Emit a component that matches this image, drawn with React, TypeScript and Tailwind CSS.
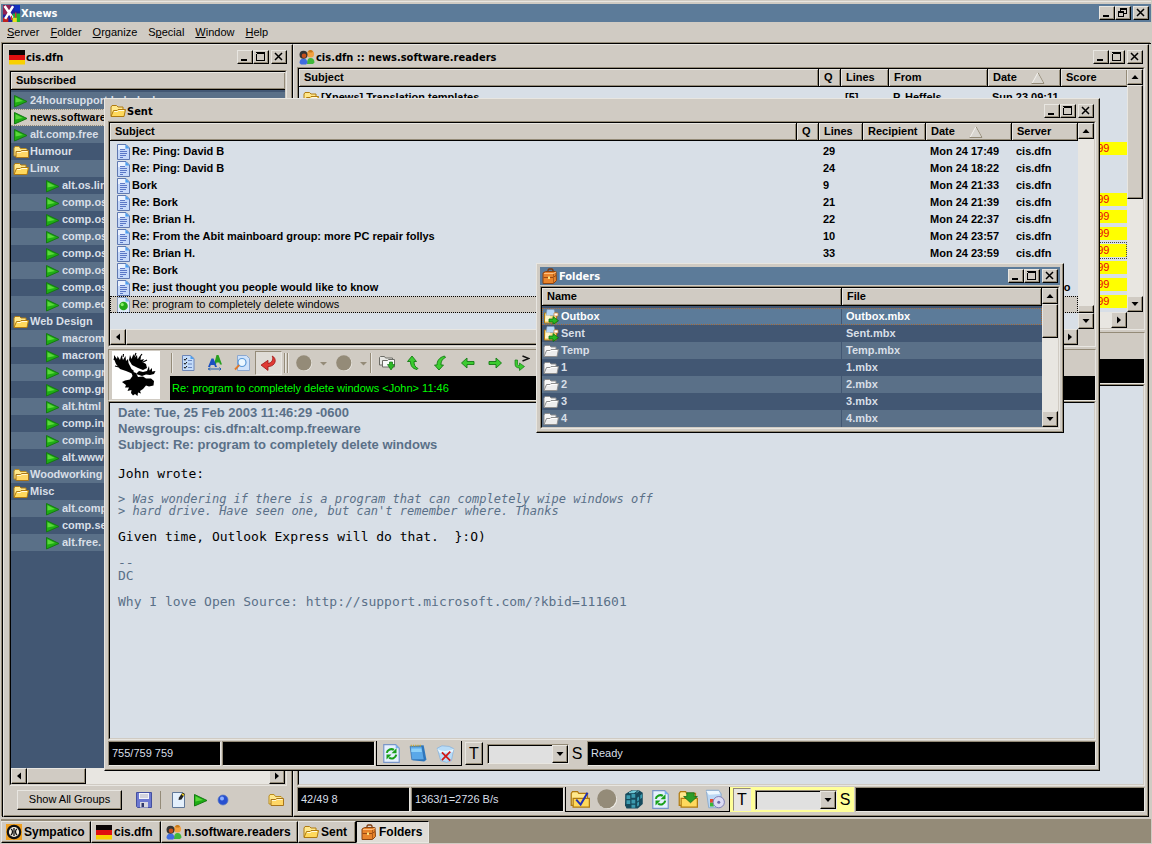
import type { ReactNode } from "react";
import clsx from "clsx";

const raised =
  "border border-t-[#e8e6e1] border-l-[#e8e6e1] border-r-black border-b-black shadow-[inset_-1px_-1px_#948b78]";
const sunken =
  "border border-t-[#948b78] border-l-[#948b78] border-r-[#e8e6e1] border-b-[#e8e6e1]";
const th =
  "h-[18px] border-r border-b border-black bg-[#d0cbc3] py-0 pr-0 pl-[5px] text-left font-bold text-black shadow-[inset_1px_1px_#e8e6e1,inset_-1px_-1px_#948b78]";
const ui = "font-['Liberation_Sans',Arial,sans-serif]";
const caption = "font-['DejaVu_Sans_Condensed','DejaVu_Sans',sans-serif]";

/* ---------- icons ---------- */

function Svg({ size = 16, children }: { size?: number; children: ReactNode }) {
  return (
    <svg width={size} height={size} viewBox="0 0 16 16" className="shrink-0" aria-hidden="true">
      {children}
    </svg>
  );
}

function Play() {
  return (
    <Svg>
      <path d="M1.500 2.500 14 8.500 1.500 14z" fill="#1fae14" stroke="#147a12" />
      <path d="M2.500 4.300 10 8 2.500 9.500z" fill="#5ad83a" />
    </Svg>
  );
}

function Folder({ white = false }: { white?: boolean }) {
  const line = white ? "#8e8e8e" : "#b07a10";
  return (
    <Svg>
      <path d="M1 13V4l1-1.500h4.500L8 4h5v3" fill={white ? "#f8f8f8" : "#ffe88c"} stroke={line} />
      <path d="M1 13.500 3.500 7.500h3.500l1-1h7.500l-1.500 7z" fill={white ? "#ededed" : "#ffd95c"} stroke={line} />
      <path d="M4.200 8.500h3.500l1-1h5.300" stroke={white ? "#fff" : "#fffbe0"} fill="none" />
    </Svg>
  );
}

function ClosedFolder() {
  return (
    <Svg>
      <path d="M1 12V4l1-1.500h4L7.500 4.500h5.500l1 1v6.500z" fill="#ffe88c" stroke="#b98a1c" />
      <path d="M3 13.500v-6h4.500l1-1h7v7z" fill="#ffd766" stroke="#a8741a" />
      <path d="M4 8.500h4l1-1h5.500" stroke="#fff8d0" fill="none" />
    </Svg>
  );
}

function Doc() {
  return (
    <Svg>
      <path d="M1.500.5h8.500l3.500 3.500v11.500h-12z" fill="#c6d9fa" stroke="#5f78b0" />
      <path d="M2 1h7v5H2z" fill="#eaf2ff" />
      <path d="M9.500.5 13.500 4.500h-4z" fill="#4aa0f0" />
      <path d="M4 5.500h5M4 7.500h7M4 9.500h7M4 11.500h6M4 13.500h3" stroke="#4f6cc0" strokeWidth=".9" />
    </Svg>
  );
}

function ReadDoc() {
  return (
    <Svg>
      <path d="M1.500.5h8.500l3.500 3.500v11.500h-12z" fill="#dfeafb" stroke="#8a9cbc" />
      <path d="M9.500.5 13.500 4.500h-4z" fill="#7ab8f0" />
      <circle cx="7.500" cy="9" r="4.300" fill="#22a818" />
      <circle cx="6.200" cy="7.600" r="1.600" fill="#8cf06c" />
    </Svg>
  );
}

function Flag() {
  return (
    <Svg>
      <path d="M0 1h16v5H0z" fill="#0a0505" />
      <path d="M0 6h16v5H0z" fill="#e01010" />
      <path d="M0 11h16v4.500H0z" fill="#f8d000" />
    </Svg>
  );
}

function People() {
  return (
    <Svg>
      <path d="M8 14c0-3 1-5 3.500-5s4 2 4 4.500L14 15H8z" fill="#3fb83a" />
      <circle cx="11.500" cy="5" r="3.600" fill="#f2a040" />
      <path d="M9 2.500c1-2 4-2 5 0l-1 1h-3z" fill="#c87818" />
      <path d="M.5 14c0-3 1.500-4.500 4-4.500s4 2 4 4.500L7 15.500H2z" fill="#3f6ce0" />
      <circle cx="4.500" cy="5.800" r="4" fill="#333" />
      <circle cx="5" cy="6.800" r="2.300" fill="#c8501c" />
    </Svg>
  );
}

function Briefcase() {
  return (
    <Svg>
      <path d="M6 4.500V2l1-1h3l1 1v2" fill="none" stroke="#7a3a10" strokeWidth="1.300" />
      <path d="M1 5 3.500 3.500h10.500l.5 9-3 3H1z" fill="#e8842c" stroke="#8a4412" />
      <path d="M2 5.500h9.500L14 4" fill="none" stroke="#ffc080" />
      <path d="M1.500 9.500h9.500l3-2" fill="none" stroke="#9a4a14" />
      <path d="M11.500 6v9" stroke="#b05c1c" />
      <path d="M6 8.500h2v2.500H6z" fill="#f8e080" />
    </Svg>
  );
}

function OutFolder() {
  return (
    <Svg>
      <path d="M1.500 14V4h12v10z" fill="#ffe08a" stroke="#b07a10" />
      <path d="M4 .5h7l1.500 6H3z" fill="#b8d8f8" stroke="#8098b0" strokeWidth=".6" />
      <path d="M3 6.500h4L8 12H2z" fill="#fff6cc" />
      <path d="M11 4h4v3h-4z" fill="#fff" stroke="#d08030" strokeWidth=".7" />
      <path d="M6 10h4V7.500l5.500 4.200L10 15.500V13H6z" fill="#28b820" stroke="#0d6a10" strokeWidth=".8" />
    </Svg>
  );
}

function XLogo() {
  return (
    <svg width="17" height="17" viewBox="0 0 16 16" className="shrink-0" aria-hidden="true">
      <path d="M0 0h16v16H0z" fill="#2020a0" />
      <path d="M0 0h7v9H0z" fill="#902050" />
      <path d="M9 8h7v8H9z" fill="#20b030" />
      <path d="M9 12h4v4H9z" fill="#e8e020" />
      <path d="M11 0h5v6h-5z" fill="#1030c0" />
      <path d="M0 12h5v4H0z" fill="#c02020" />
      <path d="M1.500 1 9 12M9.500 1 2 13" stroke="#fff" strokeWidth="2.400" />
      <path d="M8 10v4M12 7v5" stroke="#e03030" strokeWidth="1.200" />
    </svg>
  );
}

function Refresh() {
  return (
    <Svg size={19}>
      <path d="M1.500.5h10l3 3v12h-13z" fill="#e6f0ff" stroke="#7a96c8" />
      <path d="M11.500.5l3 3h-3z" fill="#78b0f0" />
      <path d="M4 7.500c.5-3 4-4 6-2.500" fill="none" stroke="#18a018" strokeWidth="1.800" />
      <path d="M12.200 3.500v4.200H8z" fill="#18a018" />
      <path d="M12 9c-.5 3-4 4-6 2.500" fill="none" stroke="#18a018" strokeWidth="1.800" />
      <path d="M3.800 13V8.800H8z" fill="#18a018" />
    </Svg>
  );
}

function Notebook() {
  return (
    <Svg size={18}>
      <path d="M1.500 2 13 1l2.500 13-2 1.500-10-1z" fill="#2c78c0" />
      <path d="M1 2h10.500l2 12H2.500z" fill="#5aa8e8" stroke="#2c68a8" strokeWidth=".6" />
      <path d="M2 4h9l.5 3H2z" fill="#8cd0f8" />
      <path d="M1.500 1.500h10" stroke="#c8a830" strokeDasharray="1 1" strokeWidth="1.500" />
    </Svg>
  );
}

function Trash() {
  return (
    <Svg size={19}>
      <path d="M1 3.500 5 1.500l6 .5 4 2-2 10-4 1.500-5-1.500z" fill="#b8dcf8" stroke="#8cb4dc" strokeWidth=".7" />
      <path d="M1 4c4 3 10 2 14 0l-1 3-11 .5z" fill="#e6f5ff" />
      <path d="m5 7 7 7M12 6.500l-7 7" stroke="#d01818" strokeWidth="1.500" />
    </Svg>
  );
}

function DocCheck() {
  return (
    <Svg>
      <path d="M2.500.5h8l3.500 3v12H2.500z" fill="#c4dcfa" stroke="#6d86b8" />
      <path d="M10.500.5 14 4h-3.500z" fill="#4aa0f0" />
      <path d="m4 4 1 1.300L7 3M4 8l1 1.300L7 7M4 12l1 1.300L7 11" fill="none" stroke="#111" />
      <path d="M8 5.500h4M8 9h4M8 12.500h4" stroke="#6b86c0" />
    </Svg>
  );
}

function Letters() {
  return (
    <Svg>
      <path d="M7 9.500 9.500 0h2l3.500 9.500h-2l-.7-2H9.500L9 9.500z" fill="#28a020" />
      <path d="M1 12 4.500 3.500H6.500L10 12H8l-.7-2H3.800L3 12z" fill="#1c50c0" />
      <path d="M1 14h13m-11-1.500L1.500 14 3 15.500m9.500-3L14 14l-1.500 1.500" stroke="#2460b0" fill="none" />
    </Svg>
  );
}

function Lens() {
  return (
    <Svg>
      <path d="M3.500 .5h9l3 3v12h-12z" fill="#cfe2fa" stroke="#8ca8d0" />
      <circle cx="8" cy="7.500" r="4" fill="#ecf7ff" stroke="#5a98d8" strokeWidth="1.200" />
      <path d="M5.200 10.200 1 14.500" stroke="#e07828" strokeWidth="1.900" />
    </Svg>
  );
}

function RedReturn() {
  return (
    <Svg size={17}>
      <path d="M11.500 1c4.500 2 4 9.500-4 10v3.500L1 9.500 7.500 5v3C11 7.500 13 4.500 11.500 1z" fill="#e03a34" stroke="#a01818" strokeWidth=".8" />
    </Svg>
  );
}

function SendFolder() {
  return (
    <Svg>
      <path d="M.5 10V2.500l1-1h4l1 1.500h7v7z" fill="#e8e8e4" stroke="#6c6c66" />
      <path d="M3.500 12V5.500h5l1-1h6v7.500z" fill="#fafafa" stroke="#6c6c66" />
      <path d="M8.500 9.500H10.500V7h3v2.500h2.300L12 15z" fill="#2cb824" stroke="#127012" strokeWidth=".7" />
    </Svg>
  );
}

const greenArrows = {
  up: "M6 1 1.500 6.500H4.500c0 4 1.500 7 6.500 8l1-1C9 12 8 10 8 6.500h2.500z",
  down: "M6 15 1.500 10H4c0-4 2-7.500 7.500-9l1 1.500C9 4 8 7 8 10h2.500z",
  left: "M1.500 8 7 3v3.500h7v3H7V13z",
  right: "M14.500 8 9 3v3.500H2v3h7V13z",
};

function GreenArrow({ dir }: { dir: keyof typeof greenArrows }) {
  return (
    <Svg>
      <path d={greenArrows[dir]} fill="#3ccc30" stroke="#147a14" strokeWidth=".9" />
    </Svg>
  );
}

function NextUnread() {
  return (
    <Svg>
      <path d="M1 5v4c0 3 2 4 4.500 4v2.500L10.500 11.500 5.500 8v2.500C4 10.500 3.500 10 3.500 9V5z" fill="#3ccc30" stroke="#147a14" strokeWidth=".7" />
      <path d="m8.500 1 6.500 2.500L8.500 6" fill="none" stroke="#111" strokeWidth="1.400" />
    </Svg>
  );
}

function FolderCheck() {
  return (
    <Svg size={20}>
      <path d="M1 13V3.500l1-1.500h4l1 1.500h7V13z" fill="#ffe88c" stroke="#b07a10" />
      <path d="M2.500 14.500v-7h13v7z" fill="#ffd95c" stroke="#b07a10" />
      <path d="m5 8.500 3.500 4L14 3" fill="none" stroke="#2030b8" strokeWidth="1.600" />
    </Svg>
  );
}

function FolderDown() {
  return (
    <Svg size={20}>
      <path d="M1 13V3.500l1-1.500h4l1 1.500h7V13z" fill="#ffe88c" stroke="#b07a10" />
      <path d="M2.500 14.500v-7h13v7z" fill="#ffd95c" stroke="#b07a10" />
      <path d="M7 3h6v3h2.500L10 11 4.500 6H7z" fill="#2c9c28" stroke="#146a14" strokeWidth=".6" />
    </Svg>
  );
}

function Cubes() {
  return (
    <Svg size={20}>
      <path d="m1 4 5-3h6l3 2v9l-4 3.500H2L.8 13z" fill="#164a5c" />
      <path d="M2 5h3v3H2zM6 4h3v3H6zM2 9h3v3H2zM6 8.500h3v3H6zM6 12.500h3V15H6zM10.500 7l1.500-1v3l-1.500 1zM13 5l1.500-1v3L13 8zM10.500 11l1.500-1v3l-1.500 1z" fill="#3c9cb0" />
      <path d="m4 3 3-1.500h3L8 3zM10 3l2-1.500" stroke="#8ce0ec" fill="#6ccbdc" strokeWidth=".5" />
    </Svg>
  );
}

function DiscBox() {
  return (
    <Svg size={20}>
      <path d="M1 1h10l2 3-1 11H3z" fill="#bcd8f4" stroke="#88a8cc" strokeWidth=".7" />
      <path d="M1 1.500h10l1 2.500-9 .5z" fill="#eef8ff" />
      <path d="M4 8h3v3H4z" fill="#e84830" />
      <path d="M4 11h3v3H4z" fill="#38b838" />
      <circle cx="11" cy="10.500" r="4.500" fill="#dcdcf4" stroke="#8080b8" strokeWidth=".8" />
      <circle cx="11" cy="10.500" r="1.200" fill="#6868a8" />
    </Svg>
  );
}

function Floppy() {
  return (
    <Svg>
      <path d="M.5 .5h15v15h-14l-1-1z" fill="#6c78d0" stroke="#4450a0" />
      <path d="M3 1h10v6H3z" fill="#f4f4fa" />
      <path d="M4 3h8M4 5h8" stroke="#b0b0c0" />
      <path d="M4 10h8v5.500H4z" fill="#d8d8e0" />
      <path d="M5.500 11h2.500v4H5.500z" fill="#30386c" />
    </Svg>
  );
}

function Compose() {
  return (
    <Svg>
      <path d="M1.500.5h10l2 2v13h-12z" fill="#e4f0fc" stroke="#607898" />
      <path d="m7.500 8 .5-2.500 3.500-5L14 2 10.500 7.500z" fill="#222" />
      <path d="m11 2 2 1.300" stroke="#f0d020" strokeWidth="1.600" />
    </Svg>
  );
}

function Ball() {
  return (
    <svg width="12" height="12" viewBox="0 0 12 12" aria-hidden="true">
      <circle cx="6" cy="6" r="5" fill="#2850d0" stroke="#5878c0" strokeWidth=".7" />
      <circle cx="5" cy="4.500" r="2" fill="#8cb0ff" />
    </svg>
  );
}

function Sympatico() {
  return (
    <Svg>
      <path d="M0 0h16v16H0z" fill="#f0a020" />
      <circle cx="8" cy="8" r="6.200" fill="#f6f0e4" stroke="#111" strokeWidth="2.200" />
      <path d="M5 5c2 1 2 4 0 6M8 4v8M11 5c-2 1-2 4 0 6" stroke="#111" strokeWidth="1.300" fill="none" />
    </Svg>
  );
}

function Moose() {
  return (
    <svg width="48" height="48" viewBox="0 0 48 48" className="mt-px ml-[3px] shrink-0 bg-white" aria-hidden="true">
      <path d="M2 4 5 8 5.500 5 8 9 9.500 4 11 9 13.500 5 14 10 16 8 16.500 12 18 15 19.500 18 22 20 20 22.500 14 20 8 18 4 13 2 8z" />
      <path d="M17 9 18 4 19.500 8 21.500 3 22.500 7 25 4 25.500 8 29 5 28.500 9 32 8 30.500 11 34 13 35 17 31 19 26 17 20 14z" />
      <path d="M11 6 11.500 3M22 7 24 2M27 7 30 3M31 11 35 9M4 9 1.500 8M7 16 3 15" stroke="#000" strokeWidth="1.200" />
      <path d="M24 23 27 20 31 21 35 20 37 15 37.500 19.500 40 17 40 20.500 43.500 20 42 23 38 24 34 23.500 30 25z" />
      <path d="M19 20 24 22 26 26 31 25.500 34 27.500 39 27.500 42 30 41.500 34.500 37 35.500 34 34.500 31 38 28 40 29 42.500 26 41.500 25.500 45 23 43 21 44.500 19 42 19.500 39 15.500 40 17 36.500 13 36.500 14 34 10 31 13 29.500 18 28.500 20.500 25z" />
      <path d="M22 17.500 25 21" stroke="#fff" strokeWidth="1.500" />
    </svg>
  );
}

function Dot({ size = 16 }: { size?: number }) {
  return (
    <svg width={size} height={size} viewBox="0 0 16 16" aria-hidden="true">
      <circle cx="8.500" cy="8.500" r="7.500" fill="#f0eee9" />
      <circle cx="7.800" cy="7.800" r="7.600" fill="#948b78" />
    </svg>
  );
}

/* ---------- window parts ---------- */

function CapButton({ kind }: { kind: "min" | "max" | "restore" | "close" }) {
  return (
    <button aria-label={kind} className={clsx("flex h-[14px] w-4 items-center justify-center bg-[#d0cbc3]", raised, kind === "close" && "ml-[2px]")}>
      <svg width="10" height="10" viewBox="0 0 10 10" fill="none" stroke="#000" shapeRendering="crispEdges" aria-hidden="true">
        {kind === "min" && <path d="M1 8h6" strokeWidth="2" />}
        {kind === "max" && <path d="M.5 1h8M.5 1.500v7h8v-7M0 .5h9" />}
        {kind === "restore" && <path d="M2.500 3V.5h6v5H6M3 1.500h5M.5 3.500h5v5h-5zM1 4.500h5" />}
        {kind === "close" && <path d="m1 1 7 7M8 1 1 8" strokeWidth="1.500" shapeRendering="auto" />}
      </svg>
    </button>
  );
}

function Caption({ icon, title, blue, restore }: { icon: ReactNode; title: string; blue?: boolean; restore?: boolean }) {
  return (
    <div className={clsx("flex h-[18px] shrink-0 items-center pr-[2px] pl-[2px]", blue ? "bg-[#5c7b99] text-white" : "text-black")}>
      {icon}
      <span className={clsx("ml-px flex-1 text-[11px] font-bold whitespace-nowrap", caption)}>{title}</span>
      <CapButton kind="min" />
      <CapButton kind={restore ? "restore" : "max"} />
      <CapButton kind="close" />
    </div>
  );
}

function Win({ className, icon, title, blue, children }: { className?: string; icon: ReactNode; title: string; blue?: boolean; children: ReactNode }) {
  return (
    <section className={clsx("flex flex-col bg-[#d0cbc3] p-[3px]", raised, className)}>
      <div className="mb-px">
        <Caption icon={icon} title={title} blue={blue} />
      </div>
      {children}
    </section>
  );
}

function Frame({ className, inner, children }: { className?: string; inner?: string; children?: ReactNode }) {
  return (
    <div className={clsx("flex min-h-0", sunken, className)}>
      <div className={clsx("flex min-w-0 flex-1 flex-col overflow-hidden border border-t-black border-r-[#d0cbc3] border-b-[#d0cbc3] border-l-black", inner)}>
        {children}
      </div>
    </div>
  );
}

const tri = {
  up: "M4 2 7.500 6h-7z",
  down: "M4 6 .5 2h7z",
  left: "M2 4 6 .5v7z",
  right: "M6 4 2 .5v7z",
};

function Arrow({ dir }: { dir: keyof typeof tri }) {
  return (
    <button aria-label={`Scroll ${dir}`} className={clsx("flex size-4 shrink-0 items-center justify-center bg-[#d0cbc3]", raised)}>
      <svg width="8" height="8" viewBox="0 0 8 8" aria-hidden="true">
        <path d={tri[dir]} />
      </svg>
    </button>
  );
}

function VScroll({ children }: { children?: ReactNode }) {
  return (
    <div className="flex w-4 shrink-0 flex-col bg-[#e8e6e1]">
      <Arrow dir="up" />
      <div className="flex flex-1 flex-col">{children}</div>
      <Arrow dir="down" />
    </div>
  );
}

function HScroll({ thumb, corner }: { thumb: string; corner?: boolean }) {
  return (
    <div className="flex h-4 shrink-0">
      <div className="flex flex-1 bg-[#e8e6e1]">
        <Arrow dir="left" />
        <div className="flex flex-1">
          <div className={clsx("bg-[#d0cbc3]", raised, thumb)} />
        </div>
        <Arrow dir="right" />
      </div>
      {corner && <div className="w-4 bg-[#d0cbc3]" />}
    </div>
  );
}

function SortHead({ label }: { label: string }) {
  return (
    <span className="flex items-center">
      {label}
      <svg width="14" height="12" viewBox="0 0 14 12" className="ml-[14px]" aria-hidden="true">
        <path d="M7 .5 13 11.500H1z" fill="#d8d5cf" stroke="#f4f2ee" />
        <path d="M7 .5 13 11.500H.5" fill="none" stroke="#948b78" />
      </svg>
    </span>
  );
}

function StatusBar({ left, right, message, alert, children }: { left: string; right?: string; message?: string; alert?: boolean; children: ReactNode }) {
  const cell = clsx("flex items-center overflow-hidden bg-black px-[3px] text-[11px] whitespace-nowrap text-[#d8dfe7]", sunken);
  return (
    <div className="flex h-[27px] shrink-0 py-px">
      <div className={clsx("mr-px w-[113px]", cell)}>{left}</div>
      <div className={clsx("mr-px w-[153px]", cell)}>{right}</div>
      <div className="flex items-center border-r border-b border-l border-black px-px">{children}</div>
      <div className={clsx("flex items-center pr-px pl-[3px]", alert && "bg-[#ffff98]")}>
        <button className={clsx("h-[23px] w-[18px] text-base leading-none", alert ? clsx(sunken, "bg-[#e8e6e1]") : clsx(raised, "bg-[#d0cbc3]"))}>T</button>
        <div className={clsx("ml-1 flex h-5 w-[82px] bg-[#e0e0e0]", sunken)}>
          <select aria-label="Search" className="min-w-0 flex-1 appearance-none border-t border-l border-black" />
          <span className={clsx("flex w-4 items-center justify-center bg-[#d0cbc3]", raised)}>
            <svg width="8" height="8" viewBox="0 0 8 8" aria-hidden="true">
              <path d={tri.down} />
            </svg>
          </span>
        </div>
        <button className="w-4 text-base leading-none">S</button>
      </div>
      <div className={clsx("ml-px min-w-0 flex-1", cell)}>{message}</div>
    </div>
  );
}

/* ---------- data ---------- */

const groups: [string, "root" | "sub" | "open" | "closed"][] = [
  ["24hoursupport.helpdesk", "root"],
  ["news.software", "root"],
  ["alt.comp.free", "root"],
  ["Humour", "closed"],
  ["Linux", "open"],
  ["alt.os.lin", "sub"],
  ["comp.os", "sub"],
  ["comp.os", "sub"],
  ["comp.os", "sub"],
  ["comp.os", "sub"],
  ["comp.os", "sub"],
  ["comp.os", "sub"],
  ["comp.ed", "sub"],
  ["Web Design", "open"],
  ["macrom", "sub"],
  ["macrom", "sub"],
  ["comp.gr", "sub"],
  ["comp.gr", "sub"],
  ["alt.html", "sub"],
  ["comp.inf", "sub"],
  ["comp.inf", "sub"],
  ["alt.www", "sub"],
  ["Woodworking", "closed"],
  ["Misc", "open"],
  ["alt.comp", "sub"],
  ["comp.se", "sub"],
  ["alt.free.", "sub"],
];

type Message = { subject: string; lines?: number; date?: string; server?: string };

const messages: Message[] = [
  { subject: "Re: Ping: David B", lines: 29, date: "Mon 24 17:49", server: "cis.dfn" },
  { subject: "Re: Ping: David B", lines: 24, date: "Mon 24 18:22", server: "cis.dfn" },
  { subject: "Bork", lines: 9, date: "Mon 24 21:33", server: "cis.dfn" },
  { subject: "Re: Bork", lines: 21, date: "Mon 24 21:39", server: "cis.dfn" },
  { subject: "Re: Brian H.", lines: 22, date: "Mon 24 22:37", server: "cis.dfn" },
  { subject: "Re: From the Abit mainboard group: more PC repair follys", lines: 10, date: "Mon 24 23:57", server: "cis.dfn" },
  { subject: "Re: Brian H.", lines: 33, date: "Mon 24 23:59", server: "cis.dfn" },
  { subject: "Re: Bork" },
  { subject: "Re: just thought you people would like to know", server: "sympatico" },
];

const scored = [3, 6, 7, 8, 9, 10, 11, 12];
const folders = ["Outbox", "Sent", "Temp", "1", "2", "3", "4"];

/* ---------- windows ---------- */

function GroupsWindow() {
  return (
    <Win className="w-[290px] shrink-0" icon={<Flag />} title="cis.dfn">
      <Frame className="mx-[2px] mt-[3px] flex-1" inner="bg-[#425773]">
        <div className={clsx(th, "flex shrink-0 items-center border-r-0")}>Subscribed</div>
        <ul className="mt-[2px] min-h-0 flex-1">
          {groups.map(([name, kind], i) => (
            <li
              key={i}
              className={clsx(
                "flex h-[17px] items-center gap-px font-bold whitespace-nowrap",
                kind === "sub" ? "pl-[34px]" : "pl-[2px]",
                i === 1
                  ? "border-y border-dotted border-[#948b78] bg-[#d0cbc3] text-black"
                  : clsx("text-[#d8dfe7]", i % 2 === 0 && "bg-[#5a7088]"),
              )}
            >
              {kind === "open" ? <Folder /> : kind === "closed" ? <ClosedFolder /> : <Play />}
              <span>{name}</span>
            </li>
          ))}
        </ul>
        <HScroll thumb="w-[59px]" />
      </Frame>
      <div className="flex h-[27px] shrink-0 items-center px-[3px]">
        <button className={clsx("ml-[7px] h-5 w-[105px] bg-[#d0cbc3]", raised)}>Show All Groups</button>
        <button aria-label="Save" className="ml-[14px]"><Floppy /></button>
        <span className="mx-2 h-[18px] w-px bg-[#948b78]" />
        <button aria-label="Compose" className="ml-[2px]"><Compose /></button>
        <button aria-label="Connect" className="ml-[6px]"><Play /></button>
        <button aria-label="Online" className="ml-2"><Ball /></button>
        <button aria-label="Folders" className="mr-[2px] ml-auto"><ClosedFolder /></button>
      </div>
    </Win>
  );
}

function ReaderWindow() {
  return (
    <Win className="min-w-0 flex-1" icon={<People />} title="cis.dfn :: news.software.readers">
      <Frame className="h-[263px] shrink-0" inner="bg-[#d8dfe7]">
        <div className="flex min-h-0 flex-1">
          <div className="min-w-0 flex-1 overflow-hidden">
            <table className="w-full table-fixed border-separate border-spacing-0">
              <thead>
                <tr>
                  <th className={th}>Subject</th>
                  <th className={clsx(th, "w-[22px]")}>Q</th>
                  <th className={clsx(th, "w-12")}>Lines</th>
                  <th className={clsx(th, "w-[99px]")}>From</th>
                  <th className={clsx(th, "w-[73px]")}><SortHead label="Date" /></th>
                  <th className={clsx(th, "w-[66px] border-r-0")}>Score</th>
                </tr>
              </thead>
              <tbody className="font-bold">
                <tr className="h-[2px]"><td /></tr>
                {Array.from({ length: 13 }, (_, i) => (
                  <tr key={i} className={clsx("h-[17px]", i === 9 && "outline-1 -outline-offset-1 outline-dotted outline-[#444]")}>
                    <td className="p-0">
                      {i === 0 && (
                        <span className="flex items-center gap-[2px] pl-1"><Folder />[Xnews] Translation templates</span>
                      )}
                    </td>
                    <td className="p-0" />
                    <td className="p-0 pl-1">{i === 0 && "[5]"}</td>
                    <td className="p-0 pl-1">{i === 0 && "P. Heffels"}</td>
                    <td className="p-0 pl-1 whitespace-nowrap">{i === 0 && "Sun 23 09:11"}</td>
                    <td className="p-0 font-normal text-red-600">
                      {scored.includes(i) && <span className="block h-[13px] bg-[#ffff00] pl-6 leading-[13px]">9999</span>}
                    </td>
                  </tr>
                ))}
              </tbody>
            </table>
          </div>
          <VScroll><div className={clsx("h-[114px] bg-[#d0cbc3]", raised)} /></VScroll>
        </div>
        <HScroll thumb="w-[600px]" corner />
      </Frame>
      <div className={clsx("mt-[2px] shrink-0", sunken)}>
        <div className="h-[26px]" />
        <div className="h-6 bg-black" />
      </div>
      <Frame className="flex-1" inner="bg-[#d8dfe7]" />
      <StatusBar left="42/49 8" right="1363/1=2726 B/s" alert>
        <button aria-label="Mark read" className="px-[3px]"><FolderCheck /></button>
        <button aria-label="Stop" className="px-[4px]"><Dot size={20} /></button>
        <button aria-label="Servers" className="px-[3px]"><Cubes /></button>
        <button aria-label="Refresh" className="px-[4px]"><Refresh /></button>
        <button aria-label="Move" className="px-[4px]"><FolderDown /></button>
        <button aria-label="Archive" className="px-[3px]"><DiscBox /></button>
      </StatusBar>
    </Win>
  );
}

function Tool({ label, pressed, children }: { label: string; pressed?: boolean; children: ReactNode }) {
  return (
    <button aria-label={label} className={clsx("flex h-6 w-[27px] shrink-0 items-center justify-center", pressed && clsx(sunken, "bg-[#dfdcd6]"))}>
      {children}
    </button>
  );
}

function DropMark() {
  return (
    <svg width="13" height="8" viewBox="0 0 13 8" className="shrink-0" aria-hidden="true">
      <path d="M3 3h7L6.500 6.500z" fill="#948b78" />
    </svg>
  );
}

function Sep() {
  return <span className="mr-px h-5 w-[2px] shrink-0 border-r border-l border-l-[#948b78] border-r-[#e8e6e1]" />;
}

function SentWindow() {
  return (
    <Win className="absolute top-[98px] right-[52px] bottom-[73px] left-[104px]" icon={<Folder />} title="Sent">
      <Frame className="h-[226px] shrink-0" inner="bg-[#d8dfe7]">
        <div className="flex min-h-0 flex-1">
          <div className="min-w-0 flex-1 overflow-hidden">
            <table className="w-full table-fixed border-separate border-spacing-0">
              <thead>
                <tr>
                  <th className={th}>Subject</th>
                  <th className={clsx(th, "w-[22px]")}>Q</th>
                  <th className={clsx(th, "w-11")}>Lines</th>
                  <th className={clsx(th, "w-[63px]")}>Recipient</th>
                  <th className={clsx(th, "w-[86px]")}><SortHead label="Date" /></th>
                  <th className={clsx(th, "w-[66px]")}>Server</th>
                </tr>
              </thead>
              <tbody className="font-bold whitespace-nowrap">
                <tr className="h-[2px]"><td /></tr>
                {messages.map((m, i) => (
                  <tr key={i} className="h-[17px]">
                    <td className="p-0">
                      <span className="flex h-[17px] items-center pl-[6px]"><Doc />{m.subject}</span>
                    </td>
                    <td className="p-0" />
                    <td className="p-0 pl-1">{m.lines}</td>
                    <td className="p-0" />
                    <td className="p-0 pl-1">{m.date}</td>
                    <td className="p-0 pl-1">{m.server}</td>
                  </tr>
                ))}
                <tr className="h-[17px] bg-[#d0cbc3] font-normal outline-1 -outline-offset-1 outline-dotted outline-black">
                  <td colSpan={6} className="p-0">
                    <span className="flex h-[17px] items-center pl-[6px]"><ReadDoc />Re: program to completely delete windows</span>
                  </td>
                </tr>
              </tbody>
            </table>
          </div>
          <VScroll><div className={clsx("mt-auto h-2 bg-[#d0cbc3]", raised)} /></VScroll>
        </div>
        <HScroll thumb="w-[900px]" corner />
      </Frame>
      <div className={clsx("mt-[2px] flex h-[52px] shrink-0", sunken)}>
        <Moose />
        <div className="ml-[10px] flex min-w-0 flex-1 flex-col">
          <div className="flex h-[26px] items-center pl-px">
            <Sep />
            <Tool label="Select"><DocCheck /></Tool>
            <Tool label="Font"><Letters /></Tool>
            <Tool label="Find"><Lens /></Tool>
            <Tool label="Wrap" pressed><RedReturn /></Tool>
            <span className="w-[2px]" />
            <Sep />
            <Sep />
            <Tool label="Back"><Dot /></Tool>
            <DropMark />
            <Tool label="Forward"><Dot /></Tool>
            <DropMark />
            <Sep />
            <Tool label="Send to folder"><SendFolder /></Tool>
            <Tool label="Previous"><GreenArrow dir="up" /></Tool>
            <Tool label="Next"><GreenArrow dir="down" /></Tool>
            <Tool label="Left"><GreenArrow dir="left" /></Tool>
            <Tool label="Right"><GreenArrow dir="right" /></Tool>
            <Tool label="Next unread"><NextUnread /></Tool>
          </div>
          <div className="flex h-6 items-center bg-black pl-[2px] text-[#00ff00]">
            Re: program to completely delete windows &lt;John&gt; 11:46
          </div>
        </div>
      </div>
      <Frame className="flex-1" inner="bg-[#d8dfe7]">
        <article className="px-2 pt-[2px] font-['DejaVu_Sans_Mono','Liberation_Mono',monospace] text-[13px] leading-[13px] text-[#5a7088]">
          <div className={clsx("text-[13px] leading-4 font-bold", ui)}>
            <p>Date: Tue, 25 Feb 2003 11:46:29 -0600</p>
            <p>Newsgroups: cis.dfn:alt.comp.freeware</p>
            <p>Subject: Re: program to completely delete windows</p>
          </div>
          <p className="mt-[14px] text-black">John wrote:</p>
          <blockquote className="mt-[13px] text-xs leading-3 italic">
            <p>&gt; Was wondering if there is a program that can completely wipe windows off</p>
            <p>&gt; hard drive. Have seen one, but can't remember where. Thanks</p>
          </blockquote>
          <p className="mt-[13px] whitespace-pre text-black">{"Given time, Outlook Express will do that.  }:O)"}</p>
          <p className="mt-[13px]">--</p>
          <p>DC</p>
          <p className="mt-[13px]">Why I love Open Source: http://support.microsoft.com/?kbid=111601</p>
        </article>
      </Frame>
      <StatusBar left="755/759 759" message="Ready">
        <button aria-label="Refresh" className="px-1"><Refresh /></button>
        <button aria-label="Notebook" className="px-1"><Notebook /></button>
        <button aria-label="Delete" className="px-[5px]"><Trash /></button>
      </StatusBar>
    </Win>
  );
}

function FoldersWindow() {
  return (
    <Win className="absolute top-[263px] right-[88px] left-[536px]" icon={<Briefcase />} title="Folders" blue>
      <Frame inner="bg-[#425773]">
        <div className="flex">
          <table className="min-w-0 flex-1 table-fixed border-separate border-spacing-0">
            <thead>
              <tr>
                <th className={clsx(th, "w-[60%]")}>Name</th>
                <th className={clsx(th, "w-[40%]")}>File</th>
              </tr>
            </thead>
            <tbody className="font-bold">
              <tr className="h-[2px]"><td /></tr>
              {folders.map((f, i) => (
                <tr
                  key={f}
                  className={clsx(
                    "h-[17px]",
                    i === 0
                      ? "bg-[#5c7b99] text-white outline-1 -outline-offset-1 outline-dotted outline-[#a3693a]"
                      : clsx("text-[#d8dfe7]", i % 2 === 0 && "bg-[#5a7088]"),
                  )}
                >
                  <td className="border-r border-[#425773] p-0">
                    <span className="flex h-[17px] items-center gap-[2px] pl-px">{i < 2 ? <OutFolder /> : <Folder white />}{f}</span>
                  </td>
                  <td className="p-0 pl-1">{f}.mbx</td>
                </tr>
              ))}
            </tbody>
          </table>
          <VScroll><div className={clsx("h-[34px] bg-[#d0cbc3]", raised)} /></VScroll>
        </div>
      </Frame>
    </Win>
  );
}

const tasks = [
  { label: "Sympatico", icon: <Sympatico />, width: "w-[90px]" },
  { label: "cis.dfn", icon: <Flag />, width: "w-[70px]" },
  { label: "n.software.readers", icon: <People />, width: "w-[137px]" },
  { label: "Sent", icon: <Folder />, width: "w-[58px]" },
  { label: "Folders", icon: <Briefcase />, width: "w-[73px]" },
];

export default function App() {
  return (
    <div className={clsx("relative flex h-screen min-h-[640px] cursor-default flex-col overflow-hidden bg-[#d0cbc3] px-px pb-px text-[11px] leading-[13px] text-black", ui)}>
      <header>
        <div className="mt-px mb-[2px] h-px bg-[#e8e6e1]" />
        <Caption icon={<XLogo />} title="Xnews" blue restore />
        <nav className="flex h-[21px] items-center gap-[11px] pl-[6px]">
          {["Server", "Folder", "Organize", "Special", "Window", "Help"].map((m) => (
            <button key={m}>
              {m === "Special" ? <>S<u>p</u>ecial</> : <><u>{m[0]}</u>{m.slice(1)}</>}
            </button>
          ))}
        </nav>
      </header>
      <main className="ml-px flex min-h-0 flex-1 border-t border-l border-black pr-[2px] shadow-[-1px_-1px_#948b78]">
        <GroupsWindow />
        <ReaderWindow />
      </main>
      <footer className="mt-[2px] flex h-6 shrink-0 bg-[#948b78] pt-[2px]">
        {tasks.map((t) => {
          const active = t.label === "Folders";
          return (
            <button
              key={t.label}
              className={clsx(
                "flex h-[22px] items-center gap-[2px] pl-1 text-xs font-bold whitespace-nowrap",
                t.width,
                active
                  ? "border border-t-black border-r-[#e8e6e1] border-b-[#e8e6e1] border-l-black bg-[#dfdcd6]"
                  : clsx(raised, "bg-[#d0cbc3]"),
              )}
            >
              {t.icon}
              {t.label}
            </button>
          );
        })}
      </footer>
      <SentWindow />
      <FoldersWindow />
    </div>
  );
}
